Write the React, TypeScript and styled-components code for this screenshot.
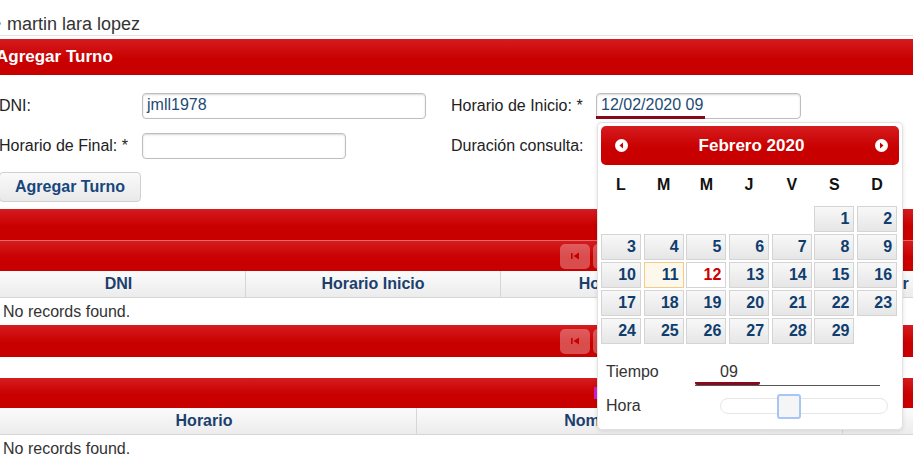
import React from "react";
import styled, { createGlobalStyle } from "styled-components";

const GlobalStyle = createGlobalStyle`
  html, body {
    margin: 0;
    padding: 0;
    overflow: hidden;
    background: #fff;
  }
  body {
    font-family: "Liberation Sans", Arial, sans-serif;
    font-size: 16px;
    color: #333;
  }
  * {
    box-sizing: border-box;
  }
`;

const Page = styled.div`
  position: relative;
  width: 1120px;
  margin-left: -8px;
`;

const UserBar = styled.div`
  height: 36px;
  padding: 12px 0 0 15px;
  font-size: 18px;
  line-height: 20px;
  color: #333;
  border-bottom: 1px solid #e4e4e4;
  display: flex;
  align-items: center;
  margin-bottom: 3px;
`;

const Dot = styled.span`
  width: 3px;
  height: 3px;
  margin-left: -9px;
  margin-right: 6px;
  background: #7fa6d6;
  border-radius: 50%;
`;

const redBar = `
  background: linear-gradient(#d51c1f, #c90000 55%, #c80000);
  color: #fff;
`;

const PanelHeader = styled.div`
  ${redBar}
  height: 36px;
  line-height: 36px;
  padding-left: 4px;
  font-weight: bold;
  font-size: 17px;
`;

const Form = styled.div`
  display: grid;
  grid-template-columns: 143px 309px 145px 1fr;
  row-gap: 14px;
  align-items: center;
  padding: 18px 0 0 7px;
`;

const Label = styled.span`
  font-size: 16px;
  color: #222;
  line-height: 26px;
`;

const FakeInput = styled.div<{ $w: number }>`
  width: ${(p) => p.$w}px;
  height: 26px;
  border: 1px solid #bdbdbd;
  border-radius: 4px;
  box-shadow: inset 0 1px 2px rgba(0, 0, 0, 0.15);
  background: #fff;
  padding-left: 4px;
  font-size: 16px;
  line-height: 22px;
  color: #1e4a74;
  display: flex;
  align-items: flex-start;
`;

const Composing = styled.span`
  border-bottom: 3px solid #87091c;
  margin-left: -5px;
  padding: 0 2px 0 5px;
  line-height: 21px;
  height: 25px;
`;

const Button = styled.button`
  margin: 13px 0 0 7px;
  width: 142px;
  height: 30px;
  border: 1px solid #d0d0d0;
  border-radius: 4px;
  background: linear-gradient(#fafafa, #e9e9e9);
  color: #17477c;
  font-family: "Liberation Sans", Arial, sans-serif;
  font-weight: bold;
  font-size: 16px;
  padding: 0;
  display: block;
`;

const Bar = styled.div<{ $h: number; $line?: boolean }>`
  ${redBar}
  height: ${(p) => p.$h}px;
  border-top: ${(p) => (p.$line ? "1px solid #e86a6a" : "none")};
  display: flex;
  align-items: center;
  padding-left: 568px;
  gap: 3px;
`;

const PageButton = styled.span`
  width: 30px;
  height: 25px;
  border-radius: 5px;
  background: rgba(255, 255, 255, 0.3);
  display: flex;
  align-items: center;
  justify-content: center;
`;

const Marker = styled.span`
  width: 3px;
  height: 12px;
  margin-left: 34px;
  background: #cc22cc;
`;

const HeadRow = styled.div<{ $cols: string }>`
  display: grid;
  grid-template-columns: ${(p) => p.$cols};
  height: 27px;
  background: linear-gradient(#fbfbfb, #ececec);
  border-bottom: 1px solid #d6d6d6;
`;

const HeadCell = styled.div`
  border-right: 1px solid #d6d6d6;
  text-align: center;
  font-weight: bold;
  font-size: 16px;
  line-height: 26px;
  color: #1c3f6e;
`;

const EmptyRow = styled.div<{ $h: number }>`
  height: ${(p) => p.$h}px;
  line-height: 27px;
  padding-left: 11px;
  font-size: 16px;
  color: #333;
`;

const Gap = styled.div<{ $h: number }>`
  height: ${(p) => p.$h}px;
`;

/* calendar overlay */
const Popup = styled.div`
  position: absolute;
  left: 605px;
  top: 122px;
  width: 306px;
  height: 308px;
  background: #fff;
  border: 1px solid #e2e2e2;
  border-radius: 5px;
  box-shadow: 0 1px 4px rgba(0, 0, 0, 0.12);
  padding: 3px;
`;

const CalHeader = styled.div`
  ${redBar}
  height: 39px;
  border-radius: 5px;
  display: flex;
  align-items: center;
  justify-content: space-between;
  padding: 0 11px 0 14px;
  font-weight: bold;
  font-size: 17px;
`;

const Arrow = styled.span`
  width: 13px;
  height: 13px;
  border-radius: 50%;
  background: #fff;
  display: flex;
  align-items: center;
  justify-content: center;
`;

const Grid = styled.div`
  display: grid;
  grid-template-columns: repeat(7, 40px);
  column-gap: 2.7px;
  row-gap: 2px;
`;

const DayName = styled.div`
  height: 39px;
  line-height: 40px;
  text-align: center;
  font-weight: bold;
  font-size: 16px;
  color: #111;
`;

const Day = styled.div<{ $kind?: "today" | "active" | "empty" }>`
  height: 26px;
  line-height: 24px;
  text-align: right;
  padding-right: 4px;
  font-weight: bold;
  font-size: 16px;
  color: ${(p) => (p.$kind === "active" ? "#cc0000" : "#0f3d6e")};
  border: 1px solid
    ${(p) =>
      p.$kind === "empty" ? "transparent" : p.$kind === "today" ? "#f6cb8a" : "#d4d4d4"};
  background: ${(p) =>
    p.$kind === "empty"
      ? "transparent"
      : p.$kind === "today"
      ? "#fdf8ec"
      : p.$kind === "active"
      ? "#fff"
      : "linear-gradient(#f8f8f8, #e6e6e6)"};
`;

const TimeRow = styled.div`
  display: grid;
  grid-template-columns: 89px 1fr;
  align-items: center;
  padding-left: 5px;
  height: 34px;
  font-size: 16px;
  color: #333;
`;

const TimeValue = styled.div`
  width: 185px;
  border-bottom: 1px solid #555;
  height: 24px;
  margin-top: 4px;
  line-height: 20px;
  font-size: 16px;
  color: #333;
`;

const TimeMark = styled.span`
  display: inline-block;
  width: 65px;
  height: 23px;
  padding-left: 25px;
  border-bottom: 3px solid #87091c;
  border-radius: 2px;
`;

const Track = styled.div`
  margin-left: 25px;
  width: 168px;
  height: 16px;
  border: 1px solid #e6e6e6;
  border-radius: 8px;
  padding-left: 56px;
  display: flex;
  align-items: center;
`;

const Handle = styled.div`
  width: 24px;
  height: 25px;
  border: 2px solid #a6c6f7;
  border-radius: 3px;
  background: #f5f5f5;
`;

function FirstIcon() {
  return (
    <svg width="10" height="8" viewBox="0 0 10 8">
      <rect x="1" y="1" width="1.6" height="6" fill="#c40000" />
      <polygon points="9,0.5 9,7.5 3.5,4" fill="#c40000" />
    </svg>
  );
}

function CircleArrow({ dir }: { dir: "prev" | "next" }) {
  return (
    <Arrow>
      <svg width="7" height="7" viewBox="0 0 7 7">
        {dir === "prev" ? (
          <polygon points="5,0.5 5,6.5 1.5,3.5" fill="#c80000" />
        ) : (
          <polygon points="2,0.5 2,6.5 5.5,3.5" fill="#c80000" />
        )}
      </svg>
    </Arrow>
  );
}

const dayNames = ["L", "M", "M", "J", "V", "S", "D"];

export default function App() {
  const cells: (number | null)[] = [null, null, null, null, null];
  for (let d = 1; d <= 29; d++) cells.push(d);

  return (
    <>
      <GlobalStyle />
      <Page>
        <UserBar>
          <Dot />
          martin lara lopez
        </UserBar>
        <PanelHeader>Agregar Turno</PanelHeader>

        <Form>
          <Label>DNI:</Label>
          <FakeInput $w={284}>jmll1978</FakeInput>
          <Label>Horario de Inicio: *</Label>
          <FakeInput $w={205}>
            <Composing>12/02/2020 09</Composing>
          </FakeInput>
          <Label>Horario de Final: *</Label>
          <FakeInput $w={204} />
          <Label>Duración consulta:</Label>
          <span />
        </Form>
        <Button>Agregar Turno</Button>

        <Gap $h={7} />
        <Bar $h={31} style={{ paddingLeft: 0 }} />
        <Bar $h={31} $line>
          <PageButton>
            <FirstIcon />
          </PageButton>
          <PageButton />
        </Bar>
        <HeadRow $cols="254px 255px 255px 255px 1fr">
          <HeadCell>DNI</HeadCell>
          <HeadCell>Horario Inicio</HeadCell>
          <HeadCell>Horario Final</HeadCell>
          <HeadCell>Doctor</HeadCell>
          <HeadCell />
        </HeadRow>
        <EmptyRow $h={27}>No records found.</EmptyRow>
        <Bar $h={32}>
          <PageButton>
            <FirstIcon />
          </PageButton>
          <PageButton />
        </Bar>
        <Gap $h={21} />
        <Bar $h={30}>
          <Marker />
        </Bar>
        <HeadRow $cols="425px 426px 1fr">
          <HeadCell>Horario</HeadCell>
          <HeadCell>Nombre Paciente</HeadCell>
          <HeadCell />
        </HeadRow>
        <EmptyRow $h={27}>No records found.</EmptyRow>

        <Popup>
          <CalHeader>
            <CircleArrow dir="prev" />
            <span>Febrero 2020</span>
            <CircleArrow dir="next" />
          </CalHeader>
          <Grid>
            {dayNames.map((n, i) => (
              <DayName key={i}>{n}</DayName>
            ))}
            {cells.map((d, i) => (
              <Day
                key={i}
                $kind={d === null ? "empty" : d === 11 ? "today" : d === 12 ? "active" : undefined}
              >
                {d ?? ""}
              </Day>
            ))}
          </Grid>
          <Gap $h={11} />
          <TimeRow>
            <span>Tiempo</span>
            <TimeValue>
              <TimeMark>09</TimeMark>
            </TimeValue>
          </TimeRow>
          <TimeRow>
            <span>Hora</span>
            <Track>
              <Handle />
            </Track>
          </TimeRow>
        </Popup>
      </Page>
    </>
  );
}
